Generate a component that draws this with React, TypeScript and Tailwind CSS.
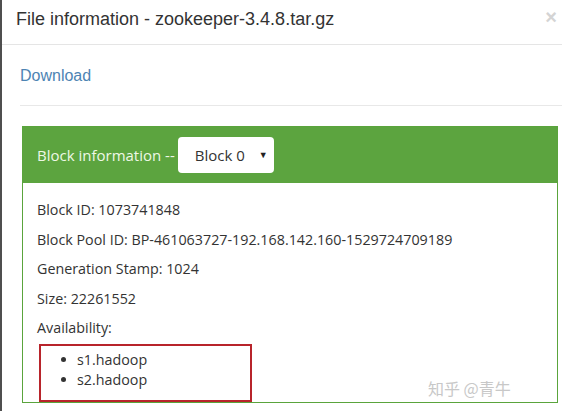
import React from 'react';

const rows = [
  'Block ID: 1073741848',
  'Block Pool ID: BP-461063727-192.168.142.160-1529724709189',
  'Generation Stamp: 1024',
  'Size: 22261552',
  'Availability:',
];

const hosts = ['s1.hadoop', 's2.hadoop'];

export default function App() {
  return (
    <div className="flex h-[411px] w-[562px] overflow-hidden bg-white">
      <div className="w-[2px] shrink-0 bg-[#4f4f4f]" />
      <div className="relative flex min-w-0 flex-1 flex-col">
        <div className="flex h-[45px] shrink-0 items-center justify-between border-b border-[#e5e5e5] pl-[14px] pr-[5px] pb-[6px]">
          <h4 className="font-['Liberation_Sans',Arial,sans-serif] text-[18px] text-[#333]">
            File information - zookeeper-3.4.8.tar.gz
          </h4>
          <span className="-mt-[4px] font-['Liberation_Sans',Arial,sans-serif] text-[20px] font-bold leading-none text-[#d4d4d4]">×</span>
        </div>

        <div className="flex flex-col pl-[18px]">
          <a className="mt-[21px] h-[20px] font-['Liberation_Sans',Arial,sans-serif] text-[16px] leading-[20px] text-[#4d84b3]">
            Download
          </a>
          <div className="mt-[19px] h-px bg-[#e8e8e8]" />

          <div className="ml-[2px] mt-[20px] w-[536px] border border-[#5aa43c]">
            <div className="flex h-[56px] items-center gap-[3px] bg-[#5ca43f] pl-[14px]">
              <span className="font-['Open_Sans',sans-serif] text-[15px] text-[#eef8e6]">Block information --</span>
              <div className="flex h-[36px] w-[96px] items-center justify-between rounded-[4px] bg-white pl-[17px] pr-[6px]">
                <span className="font-['Open_Sans',sans-serif] text-[15px] text-[#333]">Block 0</span>
                <span className="text-[9px] text-[#222]">▼</span>
              </div>
            </div>
            <div className="flex flex-col pl-[14px] pt-[12px] font-['Open_Sans',sans-serif] text-[14.3px] text-[#333]">
              {rows.map((r) => (
                <div key={r} className="h-[29.5px] leading-[29.5px]">{r}</div>
              ))}
              <ul className="ml-[2px] mt-[1px] h-[58px] w-[213px] border-2 border-[#b8242b] pl-[20px] pt-[4px]">
                {hosts.map((h) => (
                  <li key={h} className="flex h-[20px] items-center gap-[11px] leading-[20px]">
                    <span className="h-[5px] w-[5px] rounded-full bg-[#333]" />
                    {h}
                  </li>
                ))}
              </ul>
            </div>
          </div>
        </div>

        <span className="absolute left-[426px] top-[376px] font-['Noto_Sans_CJK_SC',sans-serif] text-[16px] text-[#c8c8c8]">
          知乎 @青牛
        </span>
      </div>
    </div>
  );
}
